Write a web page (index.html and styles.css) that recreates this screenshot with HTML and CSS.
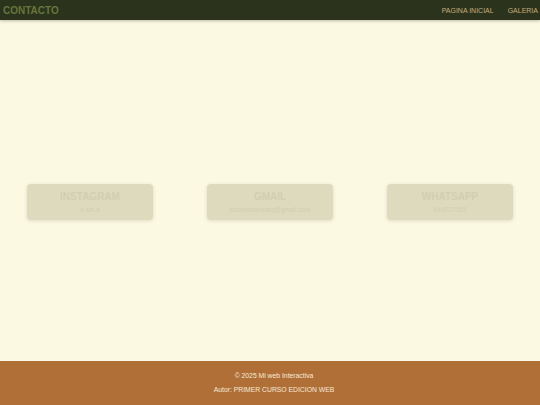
FILE: index.html
```html
<!DOCTYPE html>
<html lang="es">
<head>
<meta charset="utf-8">
<title>Contacto</title>
<link rel="stylesheet" href="styles.css">
</head>
<body>
<header class="topbar">
  <h1 class="title">CONTACTO</h1>
  <nav class="nav">
    <a href="#">PAGINA INICIAL</a>
    <a href="#">GALERIA</a>
  </nav>
</header>
<main class="main">
  <section class="cards">
    <div class="card">
      <h2 class="card-title">INSTAGRAM</h2>
      <p class="card-text">e.sin.a</p>
    </div>
    <div class="card">
      <h2 class="card-title">GMAIL</h2>
      <p class="card-text">elcorreodelsara@gmail.com</p>
    </div>
    <div class="card">
      <h2 class="card-title">WHATSAPP</h2>
      <p class="card-text">644727265</p>
    </div>
  </section>
</main>
<footer class="footer">
  <p>© 2025 Mi web Interactiva</p>
  <p>Autor: PRIMER CURSO EDICION WEB</p>
</footer>
</body>
</html>
```
FILE: styles.css
```css
* { box-sizing: border-box; }
html, body { margin: 0; padding: 0; }
body {
  font-family: "Liberation Sans", Arial, sans-serif;
  background: #fcf9e2;
  height: 405px;
  display: flex;
  flex-direction: column;
}
.topbar {
  height: 20px;
  background: #2c331c;
  display: flex;
  align-items: center;
  justify-content: space-between;
  padding: 0 2px 0 3px;
  box-shadow: 0 1px 3px rgba(0,0,0,0.25);
  position: relative;
  z-index: 1;
}
.title {
  margin: 0;
  font-size: 10px;
  font-weight: bold;
  color: #66753c;
}
.nav {
  display: flex;
  gap: 14px;
}
.nav a {
  color: #c8ad78;
  text-decoration: none;
  font-size: 7px;
}
.main {
  flex: 1;
  display: flex;
  flex-direction: column;
  padding-top: 164px;
}
.cards {
  display: flex;
  justify-content: space-around;
}
.card {
  width: 126px;
  height: 36px;
  background: #dedabe;
  border-radius: 4px;
  box-shadow: 0 1px 4px rgba(0,0,0,0.12);
  text-align: center;
  padding-top: 6px;
}
.card-title {
  margin: 0;
  font-size: 10px;
  font-weight: bold;
  color: #d2ceb2;
  line-height: 13px;
}
.card-text {
  margin: 3px 0 0;
  font-size: 6.5px;
  color: #d2ceb3;
}
.footer {
  height: 44px;
  background: #b06f37;
  color: #f6ead8;
  font-size: 6.8px;
  text-align: center;
  padding: 10px 0 0 8px;
}
.footer p { margin: 0 0 5px; line-height: 9px; }
```
